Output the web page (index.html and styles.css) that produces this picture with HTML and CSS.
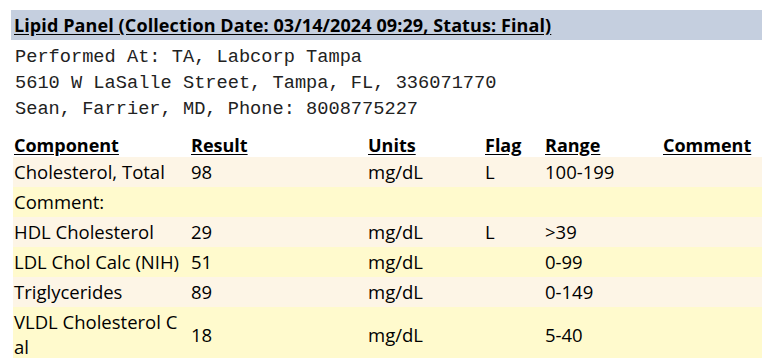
FILE: index.html
```html
<!DOCTYPE html>
<html lang="en">
<head>
<meta charset="utf-8">
<title>Lipid Panel</title>
<link rel="stylesheet" href="styles.css">
</head>
<body>
<div class="report">
  <div class="panel-title"><span class="u">Lipid Panel (Collection Date: 03/14/2024 09:29, Status: Final)</span></div>
  <div class="performed">
    <div class="mono-line">Performed At: TA, Labcorp Tampa</div>
    <div class="mono-line">5610 W LaSalle Street, Tampa, FL, 336071770</div>
    <div class="mono-line">Sean, Farrier, MD, Phone: 8008775227</div>
  </div>
  <table class="results">
    <colgroup>
      <col class="c-comp"><col class="c-res"><col class="c-units"><col class="c-flag"><col class="c-range"><col class="c-comm">
    </colgroup>
    <thead>
      <tr>
        <th><span class="u">Component</span></th>
        <th><span class="u">Result</span></th>
        <th><span class="u">Units</span></th>
        <th><span class="u">Flag</span></th>
        <th><span class="u">Range</span></th>
        <th><span class="u">Comment</span></th>
      </tr>
    </thead>
    <tbody>
      <tr class="odd"><td>Cholesterol, Total</td><td>98</td><td>mg/dL</td><td>L</td><td>100-199</td><td></td></tr>
      <tr class="even"><td>Comment:</td><td></td><td></td><td></td><td></td><td></td></tr>
      <tr class="odd"><td>HDL Cholesterol</td><td>29</td><td>mg/dL</td><td>L</td><td>&gt;39</td><td></td></tr>
      <tr class="even"><td>LDL Chol Calc (NIH)</td><td>51</td><td>mg/dL</td><td></td><td>0-99</td><td></td></tr>
      <tr class="odd"><td>Triglycerides</td><td>89</td><td>mg/dL</td><td></td><td>0-149</td><td></td></tr>
      <tr class="even"><td class="brk">VLDL Cholesterol Cal</td><td>18</td><td>mg/dL</td><td></td><td>5-40</td><td></td></tr>
    </tbody>
  </table>
</div>
</body>
</html>
```

FILE: styles.css
```css
html, body {
  margin: 0;
  padding: 0;
  background: #ffffff;
  overflow: hidden;
}
body {
  font-family: "Open Sans", Lato, sans-serif;
  color: #000000;
}
.report {
  padding: 10px 0 0 11px;
}
.u {
  text-decoration: underline;
  text-underline-offset: 2px;
}
.panel-title {
  background: #c5cfdf;
  height: 30px;
  line-height: 30px;
  padding-left: 3px;
  font-weight: bold;
  font-size: 18px;
  letter-spacing: 0.1px;
  white-space: nowrap;
}
.performed {
  padding: 4px 0 0 4px;
  font-family: "Liberation Mono", "Courier New", monospace;
  font-size: 18.67px;
  color: #222222;
}
.mono-line {
  height: 26px;
  line-height: 26px;
  white-space: nowrap;
}
.results {
  margin-top: 5px;
  margin-left: 2px;
  border-collapse: collapse;
  table-layout: fixed;
  width: 749px;
  font-size: 18.5px;
}
.c-comp { width: 177px; }
.c-res { width: 177px; }
.c-units { width: 117px; }
.c-flag { width: 60px; }
.c-range { width: 118px; }
.c-comm { width: 100px; }
.results th {
  text-align: left;
  font-weight: bold;
  font-size: 18px;
  padding: 0 1px;
  height: 30px;
  line-height: 24px;
  vertical-align: bottom;
  white-space: nowrap;
}
.results td {
  padding: 2px 1px 3px;
  line-height: 25px;
  vertical-align: middle;
  white-space: nowrap;
}
.results td.brk {
  padding-right: 10px;
  white-space: normal;
  word-break: break-all;
}
.results tr.odd { background: #fdf5e6; }
.results tr.even { background: #fffacd; }
```
